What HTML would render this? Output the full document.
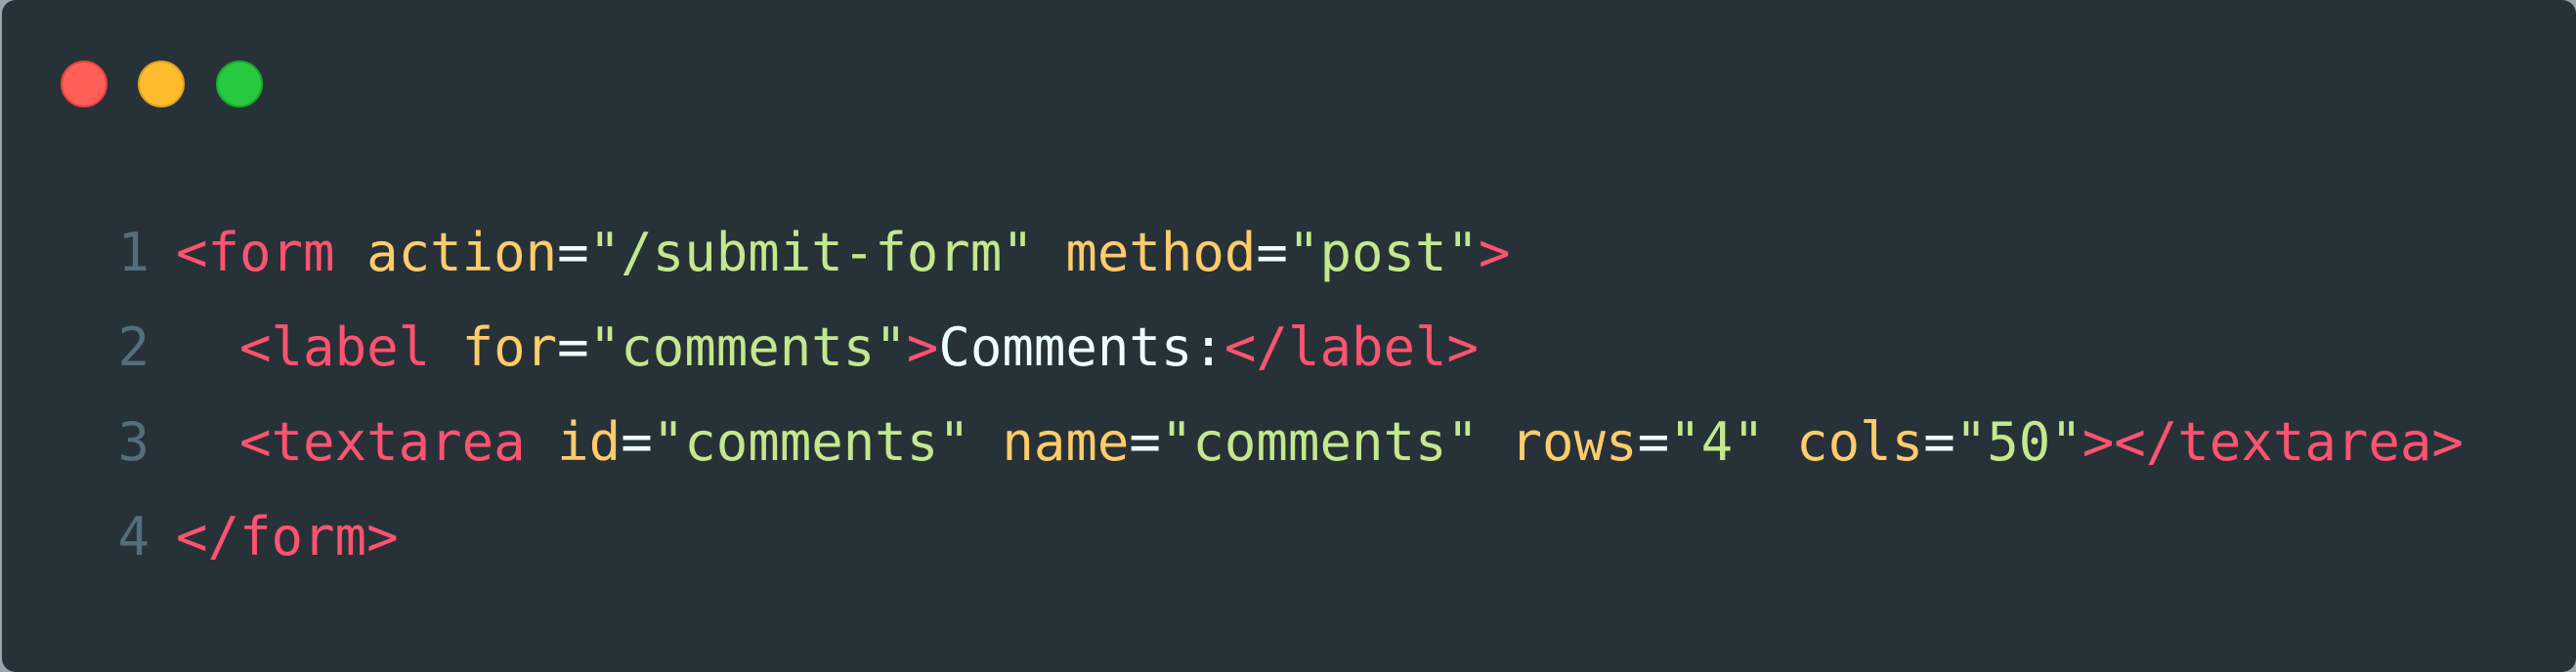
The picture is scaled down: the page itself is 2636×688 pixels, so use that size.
<!DOCTYPE html>
<html><head><meta charset="utf-8"><style>
html,body{margin:0;padding:0;width:2636px;height:688px;overflow:hidden;background:#9aa4ad;}
.card{position:absolute;left:2px;top:0;width:2634px;height:688px;background:#263238;border-radius:14px;}
.dot{position:absolute;top:62px;width:48px;height:48px;border-radius:50%;box-sizing:border-box;}
.code{position:absolute;left:0;top:210px;font-family:"DejaVu Sans Mono","Liberation Mono",monospace;font-size:54px;line-height:97px;white-space:pre;color:#eeffff;}
.ln{display:inline-block;width:151px;text-align:right;color:#546e7a;margin-right:27px;}
.t{color:#ff5370}.a{color:#ffcb6b}.s{color:#c3e88d}
</style></head><body>
<div class="card">
<div class="dot" style="left:60px;background:#ff5f56;border:2px solid #e0443e"></div>
<div class="dot" style="left:139px;background:#ffbd2e;border:2px solid #dea123"></div>
<div class="dot" style="left:219px;background:#27c93f;border:2px solid #1aab29"></div>
<div class="code"><div><span class="ln">1</span><span class="t">&lt;form</span> <span class="a">action</span>=<span class="s">"/submit-form"</span> <span class="a">method</span>=<span class="s">"post"</span><span class="t">&gt;</span></div><div><span class="ln">2</span>  <span class="t">&lt;label</span> <span class="a">for</span>=<span class="s">"comments"</span><span class="t">&gt;</span>Comments:<span class="t">&lt;/label&gt;</span></div><div><span class="ln">3</span>  <span class="t">&lt;textarea</span> <span class="a">id</span>=<span class="s">"comments"</span> <span class="a">name</span>=<span class="s">"comments"</span> <span class="a">rows</span>=<span class="s">"4"</span> <span class="a">cols</span>=<span class="s">"50"</span><span class="t">&gt;&lt;/textarea&gt;</span></div><div><span class="ln">4</span><span class="t">&lt;/form&gt;</span></div></div>
</div>
</body></html>
